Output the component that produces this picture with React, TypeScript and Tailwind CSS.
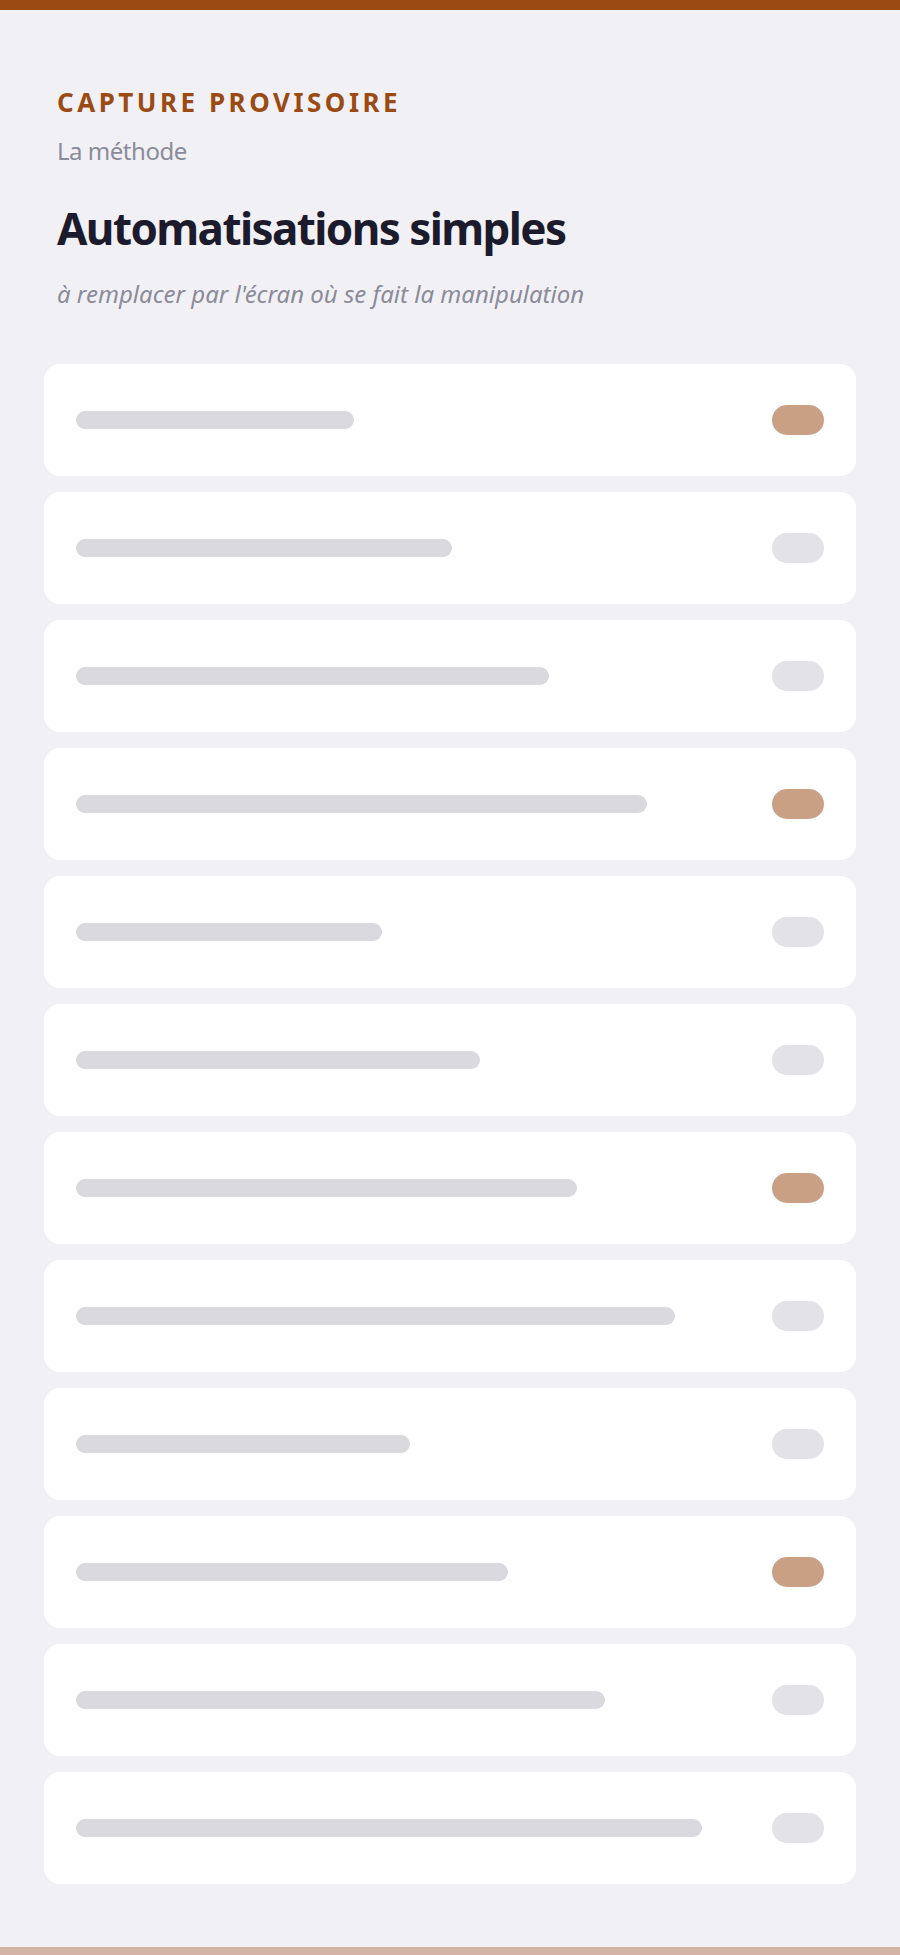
const rows = [
    { pct: 40, on: true },
    { pct: 54, on: false },
    { pct: 68, on: false },
    { pct: 82, on: true },
    { pct: 44, on: false },
    { pct: 58, on: false },
    { pct: 72, on: true },
    { pct: 86, on: false },
    { pct: 48, on: false },
    { pct: 62, on: true },
    { pct: 76, on: false },
    { pct: 90, on: false },
];

const App = () => {
    return (
        <div
            className="min-h-screen flex flex-col bg-[#f1f1f5]"
            style={{ fontFamily: '"Segoe UI", "Noto Sans", "Open Sans", sans-serif' }}
        >
            {/* top accent */}
            <div className="h-[10px] bg-[#9a4a12]" />

            {/* ============ HEADER ============ */}
            <header className="px-[57px] pt-[79px] flex flex-col">
                <div className="text-[26px] leading-[26px] font-bold tracking-[0.135em] text-[#9a4a12]">
                    CAPTURE PROVISOIRE
                </div>
                <div className="mt-[24px] text-[24px] leading-[24px] tracking-[-0.02em] text-[#8b8b9a]">
                    La méthode
                </div>
                <h1 className="mt-[43px] text-[44px] leading-[44px] font-bold tracking-[-0.036em] text-[#1c1b2e]">
                    Automatisations simples
                </h1>
                <p className="mt-[32px] text-[24px] leading-[24px] italic text-[#8b8b9a]">
                    à remplacer par l'écran où se fait la manipulation
                </p>
            </header>

            {/* ============ LIST ============ */}
            <main className="mt-[58px] px-[44px] pb-[63px] flex flex-col gap-4 flex-1">
                {rows.map((row, i) => (
                    <div
                        key={i}
                        className="h-[112px] bg-white rounded-2xl px-8 flex items-center"
                    >
                        <div className="flex-1">
                            <div
                                className="h-[18px] rounded-full bg-[#d9d9de]"
                                style={{ width: `${row.pct}%` }}
                            />
                        </div>
                        <div
                            className={
                                row.on
                                    ? "w-[52px] h-[30px] rounded-full bg-[#c9a083]"
                                    : "w-[52px] h-[30px] rounded-full bg-[#e2e2e7]"
                            }
                        />
                    </div>
                ))}
            </main>

            {/* bottom accent */}
            <div className="h-2 bg-[#d4b5a5]" />
        </div>
    );
};

export default App;
